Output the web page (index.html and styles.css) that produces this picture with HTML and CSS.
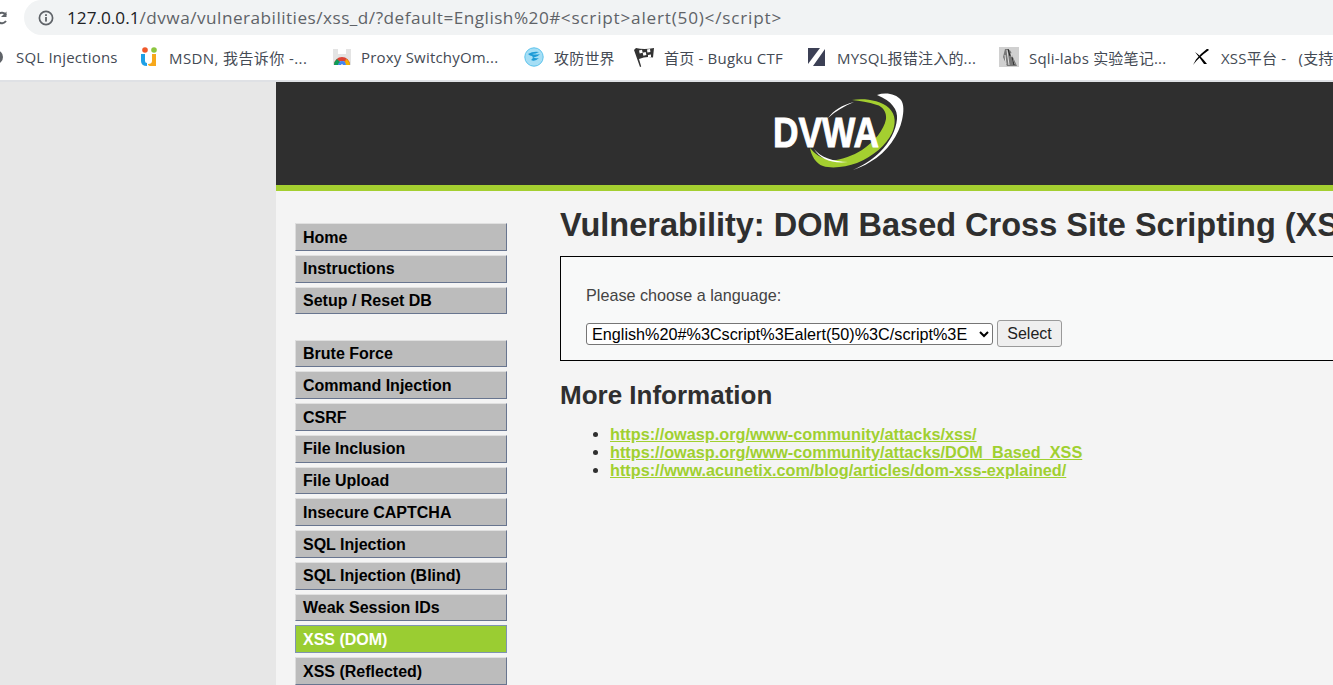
FILE: index.html
```html
<!DOCTYPE html>
<html lang="en">
<head>
<meta charset="utf-8">
<title>Vulnerability: DOM Based Cross Site Scripting (XSS)</title>
<link rel="stylesheet" href="styles.css">
</head>
<body>
<div class="browser">
  <div class="addressrow">
    <svg class="reload" width="10" height="16" viewBox="0 0 10 16"><path d="M6 5A5.200 5.200 0 1 0 6 11" fill="none" stroke="#5f6368" stroke-width="2"/><path d="M6.500 1.500v5.500H1z" fill="#5f6368"/></svg>
    <div class="omnibox">
      <svg class="info" width="16" height="16" viewBox="0 0 16 16"><circle cx="8" cy="8" r="6.6" fill="none" stroke="#5f6368" stroke-width="1.7"/><rect x="7.1" y="7" width="1.8" height="4.6" fill="#5f6368"/><rect x="7.1" y="4.2" width="1.8" height="1.8" fill="#5f6368"/></svg>
      <span class="url"><span class="host">127.0.0.1</span><span class="path">/dvwa/vulnerabilities/xss_d/?default=English%20#</span><span class="hash">&lt;script&gt;alert(50)&lt;/script&gt;</span></span>
    </div>
  </div>
  <div class="bookmarks">
    <div class="bm bm1"><svg width="16" height="16" viewBox="0 0 16 16"><circle cx="4" cy="8" r="7" fill="#5f6368"/><path d="M-2 9h10a6 6 0 0 1-10 3z" fill="#fff"/></svg><span>SQL Injections</span></div>
    <div class="bm bm2"><svg width="18" height="20" viewBox="0 0 18 20"><circle cx="5" cy="3" r="2.8" fill="#f0592b"/><circle cx="14" cy="3" r="2.8" fill="#8cc63f"/><path d="M1 7h4v7q0 2 2 2v3q-6 0-6-5z" fill="#1ea0e6"/><path d="M12 7h4v12h-5q-3 0-3-2 4 0 4-3z" fill="#f7a81b"/></svg><span>MSDN, 我告诉你 -...</span></div>
    <div class="bm bm3"><svg width="18" height="18" viewBox="0 0 18 18"><rect x="0" y="1" width="18" height="16" fill="#e4e4e4"/><rect x="5" y="1" width="8" height="5" fill="#fff"/><path d="M1 17a8 8 0 0 1 16 0h-4a4 4 0 0 0-8 0z" fill="#db4437"/><path d="M9 13a4 4 0 0 0-4 4h3a1 1 0 0 1 2 0h3a4 4 0 0 0-4-4z" fill="#4285f4"/><path d="M1 17a8 8 0 0 1 3-6l3 3a4 4 0 0 0-2 3z" fill="#0f9d58"/><path d="M13 11a8 8 0 0 1 4 6h-4a4 4 0 0 0-1-3z" fill="#f4b400"/></svg><span>Proxy SwitchyOm...</span></div>
    <div class="bm bm4"><svg width="20" height="20" viewBox="0 0 20 20"><circle cx="10" cy="10" r="9.2" fill="#a5def5" stroke="#5cc3ec"/><path d="M4 7q5-3 11-2-3 2-7 2 4 1 8 0-3 4-7 3 2 2 6 1-4 4-8 2 3-2 1-4-2 0-4-2z" fill="#1c9ad6"/></svg><span>攻防世界</span></div>
    <div class="bm bm5"><svg width="20" height="20" viewBox="0 0 20 20"><path d="M0 3 6 20l1.2-.4L5 12q7-3 14-1.500L20 1Q10 3 2 1z" fill="#333"/><path d="M5 3.500l3-.7.7 3 3-.7.7 3-3 .7-.7-3-3 .7zM13 2.500l3-.5.4 3-3 .5zM14 8l3-.4v2.500l-3-.2z" fill="#fff"/></svg><span>首页 - Bugku CTF</span></div>
    <div class="bm bm6"><svg width="17" height="18" viewBox="0 0 17 18"><path d="M0 0h12L0 16zM17 1v17H5z" fill="#3c4055"/></svg><span>MYSQL报错注入的...</span></div>
    <div class="bm bm7"><svg width="20" height="20" viewBox="0 0 20 20"><rect width="20" height="20" fill="#d0d0d0"/><path d="M6 2q6-1 7 6l5 11H8L4 10z" fill="#777"/><path d="M8 3l2 15M12 6l3 11M6 8l1 9" stroke="#e2e2e2" fill="none"/><path d="M9 2l2 7M13 10l2 8" stroke="#222" fill="none"/></svg><span>Sqli-labs 实验笔记...</span></div>
    <div class="bm bm8"><svg width="16" height="16" viewBox="0 0 16 16"><path d="M0 16Q6 8 16 1l-1.500-1.500Q7 5 3 10.500z" fill="#000"/><path d="M2 3q6 4 12 12h-3Q7 9 2 3z" fill="#000"/></svg><span class="clip">XSS平台 -&nbsp;&nbsp;&nbsp;(支持</span></div>
  </div>
</div>
<div class="page">
  <div class="gutter"></div>
  <div class="container">
    <header class="banner">
      <svg class="logo" width="134" height="80" viewBox="0 0 134 80">
        <path d="M107 3C116 0 126 2 131 8C134 12 134 20 132 28C129 42 118 60 100 70C94 74 88 76 83 78C96 72 104 66 110 60C120 50 126 38 127 27C128 18 122 9 107 3Z" fill="#fff"/>
        <path d="M82 8C94 6 110 8 119 16C126 23 126 32 122 41C116 53 104 64 87 71C76 75 62 77 53 74C46 72 41 63 40 56C44 61 50 66 60 68C70 69 82 64 92 58C104 50 114 38 116 27C117 20 112 14 107 13C98 10 90 9 82 8Z" fill="#a4cf30"/>
        <path d="M58 26C64 18 72 13 84 10C74 14 66 19 58 26ZM44 57C50 65 64 70 78 70C62 72 50 67 44 57Z" fill="#fff"/>
        <text class="logotext" x="3" y="55" textLength="106" lengthAdjust="spacingAndGlyphs">DVWA</text>
      </svg>
    </header>
    <div class="body">
      <nav class="menu">
        <ul class="group">
          <li class="item">Home</li>
          <li class="item">Instructions</li>
          <li class="item">Setup / Reset DB</li>
        </ul>
        <ul class="group">
          <li class="item">Brute Force</li>
          <li class="item">Command Injection</li>
          <li class="item">CSRF</li>
          <li class="item">File Inclusion</li>
          <li class="item">File Upload</li>
          <li class="item">Insecure CAPTCHA</li>
          <li class="item">SQL Injection</li>
          <li class="item">SQL Injection (Blind)</li>
          <li class="item">Weak Session IDs</li>
          <li class="item selected">XSS (DOM)</li>
          <li class="item">XSS (Reflected)</li>
        </ul>
      </nav>
      <main class="content">
        <h1 class="title">Vulnerability: DOM Based Cross Site Scripting (XSS)</h1>
        <div class="box">
          <p class="prompt">Please choose a language:</p>
          <form class="form">
            <select class="select"><option>English%20#%3Cscript%3Ealert(50)%3C/script%3E</option></select>
            <button class="button" type="button">Select</button>
          </form>
        </div>
        <h2 class="more">More Information</h2>
        <ul class="links">
          <li><a href="#">https://owasp.org/www-community/attacks/xss/</a></li>
          <li><a href="#">https://owasp.org/www-community/attacks/DOM_Based_XSS</a></li>
          <li><a href="#">https://www.acunetix.com/blog/articles/dom-xss-explained/</a></li>
        </ul>
      </main>
    </div>
  </div>
</div>
</body>
</html>
```
FILE: styles.css
```css
* { box-sizing: border-box; }
html, body { margin: 0; height: 685px; overflow: hidden; background: #e7e7e7; }
body { font-family: "Liberation Sans", Arial, sans-serif; color: #2f2f2f; }

.browser { height: 82px; background: #fff; border-bottom: 2px solid #dfe1e5; overflow: hidden; }
.addressrow { height: 36px; display: flex; align-items: flex-start; }
.reload { flex: none; margin-top: 10px; margin-right: 14px; }
.omnibox { flex: 1; height: 35px; margin-right: -40px; border-radius: 18px; background: #f1f3f4; display: flex; align-items: center; padding-left: 14px; }
.info { flex: none; margin-right: 13px; }
.url { font-family: "Open Sans", "Noto Sans", sans-serif; font-size: 17.2px; color: #5f6368; white-space: nowrap; }
.host { color: #202124; }
.path { letter-spacing: 0.48px; }
.hash { letter-spacing: 0.78px; }

.bookmarks { height: 44px; display: flex; align-items: center; padding-bottom: 2px; white-space: nowrap; color: #444a54; font-family: "Open Sans", "Noto Sans CJK SC", sans-serif; font-size: 15px; letter-spacing: 0.2px; }
.bm { display: flex; align-items: center; flex: none; }
.bm span { display: block; }
.bm1 { width: 148px; margin-left: -8px; }
.bm1 svg { margin-right: 8px; }
.bm2 { width: 193px; letter-spacing: 0.4px; }
.bm2 svg { margin-right: 11px; }
.bm3 { width: 191px; }
.bm3 svg { margin-right: 10px; }
.bm4 { width: 110px; }
.bm4 svg { margin-right: 10px; }
.bm5 { width: 174px; }
.bm5 svg { margin-right: 10px; }
.bm6 { width: 191px; }
.bm6 svg { margin-right: 12px; }
.bm7 { width: 194px; }
.bm7 svg { margin-right: 10px; }
.bm8 svg { margin-right: 12px; }

.page { display: flex; height: 603px; }
.gutter { width: 276px; flex: none; background: #e7e7e7; }
.container { width: 1057px; flex: none; background: #f4f4f4; overflow: hidden; }

.banner { height: 109px; background: #2f2f2f; border-bottom: 6px solid #a4cf30; padding: 10px 0 0 494px; }
.logo { display: block; overflow: visible; }
.logotext { font-family: "Liberation Sans", sans-serif; font-weight: 700; font-size: 42px; fill: #fff; stroke: #fff; stroke-width: 0.9px; }

.body { display: flex; padding: 32px 0 0 19px; }
.menu { width: 212px; flex: none; margin-right: 53px; }
.group { list-style: none; margin: 0 0 25.25px; padding: 0; }
.item { height: 27.75px; margin-bottom: 4px; padding: 3.6px 0 0 7px; background: #bcbcbc; border-top: 1px solid #e0e0e0; border-left: 1px solid #dcdcdc; border-bottom: 1px solid #68758f; border-right: 1px solid #68758f; font-size: 16px; font-weight: 700; line-height: 19px; color: #000; white-space: nowrap; }
.item.selected { background: #9acd32; color: #fff; border-color: #7f93b2; }

.content { flex: none; width: 900px; }
.title { margin: -16px 0 0; font-size: 32.5px; line-height: 37px; font-weight: 700; color: #2f2f2f; white-space: nowrap; padding-bottom: 12px; }
.box { height: 105px; background: #f8f9f9; border: 1px solid #000; padding: 29px 0 0 25px; }
.prompt { margin: 0; font-size: 16.2px; line-height: 18px; color: #444; }
.form { display: flex; align-items: flex-start; margin-top: 16px; }
.select { width: 407px; height: 22px; margin-top: 3px; padding: 0 0 0 1px; font-family: "Liberation Sans", sans-serif; font-size: 16.2px; background: #fff; color: #000; border: 1px solid #767676; border-radius: 3px; }
.button { width: 65px; height: 27px; margin-left: 4px; padding: 0; font-family: "Liberation Sans", sans-serif; font-size: 16px; background: #efefef; color: #222; border: 1px solid #9a9a9a; border-radius: 3px; }
.more { margin: 19px 0 0; font-size: 26px; line-height: 31px; font-weight: 700; color: #2f2f2f; }
.links { margin: 14px 0 0; padding: 0 0 0 50px; font-size: 16.25px; line-height: 18px; color: #2f2f2f; }
.links a { color: #a0d030; font-weight: 700; text-decoration: underline; }
```
